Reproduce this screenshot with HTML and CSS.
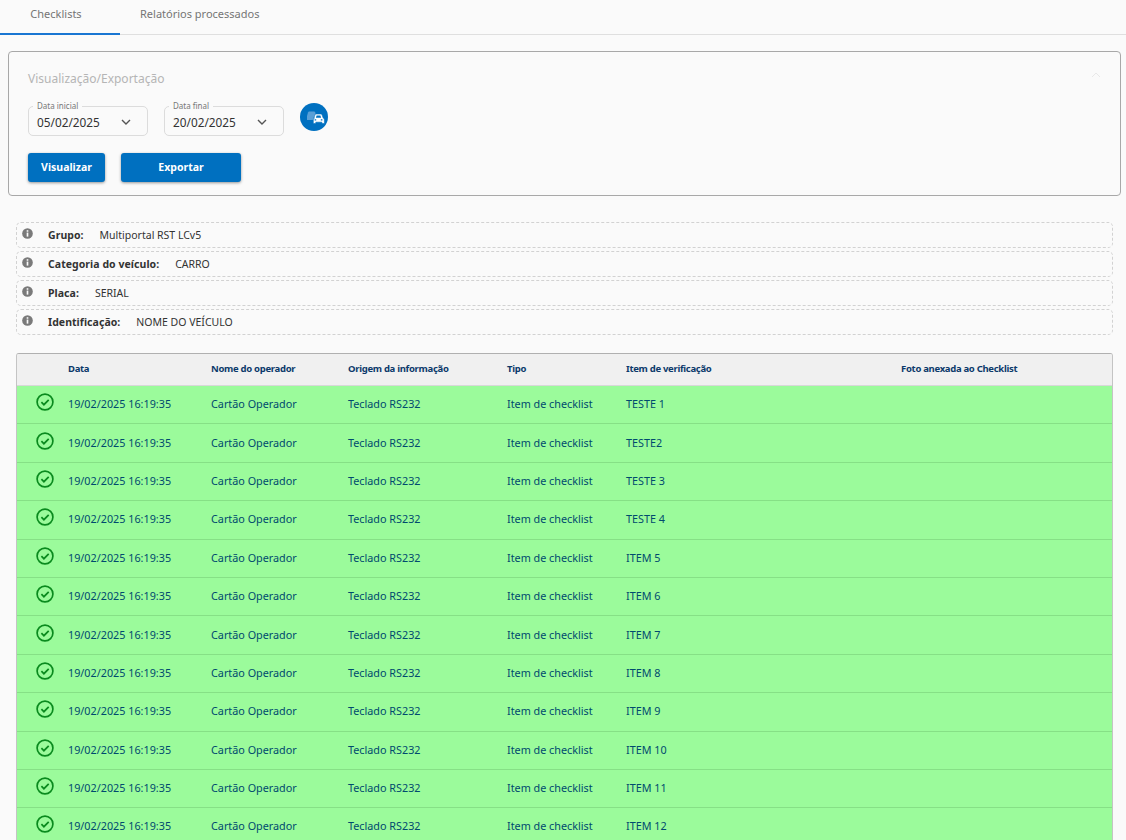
FILE: index.html
```html
<!DOCTYPE html>
<html lang="pt-BR">
<head>
<meta charset="utf-8">
<title>Checklists</title>
<link rel="stylesheet" href="styles.css">
</head>
<body>
<svg class="defs" width="0" height="0" aria-hidden="true">
  <symbol id="ok" viewBox="0 0 18 18"><circle cx="9" cy="9" r="7.9" fill="none" stroke="currentColor" stroke-width="1.7"/><path d="M5.4 9.2l2.5 2.5 4.8-4.9" fill="none" stroke="currentColor" stroke-width="1.7"/></symbol>
  <symbol id="info" viewBox="0 0 12 12"><circle cx="6" cy="6" r="5.8" fill="currentColor"/><rect x="5.1" y="2.4" width="1.8" height="1.7" fill="#fafafa"/><rect x="5.1" y="5" width="1.8" height="4.4" fill="#fafafa"/></symbol>
  <symbol id="chev" viewBox="0 0 10 6"><path d="M1 1l4 4 4-4" fill="none" stroke="currentColor" stroke-width="1.4"/></symbol>
</svg>
<nav class="tabs">
  <a class="tab tab-active">Checklists</a>
  <a class="tab">Relatórios processados</a>
</nav>
<main class="content">
  <section class="panel">
    <div class="panel-head">
      <h2 class="panel-title">Visualização/Exportação</h2>
      <svg class="panel-chev" viewBox="0 0 10 6"><path d="M1 5l4-4 4 4" fill="none" stroke="currentColor" stroke-width="1"/></svg>
    </div>
    <div class="filters">
      <div class="field"><span class="field-label">Data inicial</span><span class="field-value">05/02/2025</span><svg class="chev"><use href="#chev"/></svg></div>
      <div class="field"><span class="field-label">Data final</span><span class="field-value">20/02/2025</span><svg class="chev"><use href="#chev"/></svg></div>
      <button class="round-btn" type="button" aria-label="Veículos">
        <svg viewBox="0 0 28 28" width="28" height="28">
          <path fill="#5a9fd6" d="M7 17v-4l1-3.400C8.200 9 8.700 8.500 9.400 8.500h4.400c.7 0 1.200.5 1.400 1.100L16 13v4z"/>
          <path fill="#fff" stroke="#0070c0" stroke-width=".6" d="M13.800 15l1.200-3.200c.2-.5.6-.8 1.100-.8h4.800c.5 0 .9.300 1.100.8l1.200 3.200c.8.300 1.200.9 1.200 1.700V20.500h-2.500v-1.300h-6.100v1.300h-2.500v-3.800c0-.8.400-1.400 1.200-1.700z"/>
          <path fill="#0070c0" d="M15.900 14.700h5.200l-.7-2.100h-3.800zM14.600 16.200h1.600v1.300h-1.600zM20.800 16.200h1.600v1.300h-1.600z"/>
        </svg>
      </button>
    </div>
    <div class="actions">
      <button class="btn btn-view" type="button">Visualizar</button>
      <button class="btn btn-export" type="button">Exportar</button>
    </div>
  </section>

  <section class="info-list">
    <div class="info-row"><svg class="info-icon"><use href="#info"/></svg><strong>Grupo:</strong><span>Multiportal RST LCv5</span></div>
    <div class="info-row"><svg class="info-icon"><use href="#info"/></svg><strong>Categoria do veículo:</strong><span>CARRO</span></div>
    <div class="info-row"><svg class="info-icon"><use href="#info"/></svg><strong>Placa:</strong><span>SERIAL</span></div>
    <div class="info-row"><svg class="info-icon"><use href="#info"/></svg><strong>Identificação:</strong><span>NOME DO VEÍCULO</span></div>
  </section>

  <section class="table">
    <div class="tr th"><span></span><span>Data</span><span>Nome do operador</span><span>Origem da informação</span><span>Tipo</span><span>Item de verificação</span><span>Foto anexada ao Checklist</span></div>
    <div class="tr"><svg class="ok"><use href="#ok"/></svg><span>19/02/2025 16:19:35</span><span>Cartão Operador</span><span>Teclado RS232</span><span>Item de checklist</span><span>TESTE 1</span><span></span></div>
    <div class="tr"><svg class="ok"><use href="#ok"/></svg><span>19/02/2025 16:19:35</span><span>Cartão Operador</span><span>Teclado RS232</span><span>Item de checklist</span><span>TESTE2</span><span></span></div>
    <div class="tr"><svg class="ok"><use href="#ok"/></svg><span>19/02/2025 16:19:35</span><span>Cartão Operador</span><span>Teclado RS232</span><span>Item de checklist</span><span>TESTE 3</span><span></span></div>
    <div class="tr"><svg class="ok"><use href="#ok"/></svg><span>19/02/2025 16:19:35</span><span>Cartão Operador</span><span>Teclado RS232</span><span>Item de checklist</span><span>TESTE 4</span><span></span></div>
    <div class="tr"><svg class="ok"><use href="#ok"/></svg><span>19/02/2025 16:19:35</span><span>Cartão Operador</span><span>Teclado RS232</span><span>Item de checklist</span><span>ITEM 5</span><span></span></div>
    <div class="tr"><svg class="ok"><use href="#ok"/></svg><span>19/02/2025 16:19:35</span><span>Cartão Operador</span><span>Teclado RS232</span><span>Item de checklist</span><span>ITEM 6</span><span></span></div>
    <div class="tr"><svg class="ok"><use href="#ok"/></svg><span>19/02/2025 16:19:35</span><span>Cartão Operador</span><span>Teclado RS232</span><span>Item de checklist</span><span>ITEM 7</span><span></span></div>
    <div class="tr"><svg class="ok"><use href="#ok"/></svg><span>19/02/2025 16:19:35</span><span>Cartão Operador</span><span>Teclado RS232</span><span>Item de checklist</span><span>ITEM 8</span><span></span></div>
    <div class="tr"><svg class="ok"><use href="#ok"/></svg><span>19/02/2025 16:19:35</span><span>Cartão Operador</span><span>Teclado RS232</span><span>Item de checklist</span><span>ITEM 9</span><span></span></div>
    <div class="tr"><svg class="ok"><use href="#ok"/></svg><span>19/02/2025 16:19:35</span><span>Cartão Operador</span><span>Teclado RS232</span><span>Item de checklist</span><span>ITEM 10</span><span></span></div>
    <div class="tr"><svg class="ok"><use href="#ok"/></svg><span>19/02/2025 16:19:35</span><span>Cartão Operador</span><span>Teclado RS232</span><span>Item de checklist</span><span>ITEM 11</span><span></span></div>
    <div class="tr"><svg class="ok"><use href="#ok"/></svg><span>19/02/2025 16:19:35</span><span>Cartão Operador</span><span>Teclado RS232</span><span>Item de checklist</span><span>ITEM 12</span><span></span></div>
  </section>
</main>
</body>
</html>
```
FILE: styles.css
```css
* { box-sizing: border-box; }
html, body { margin: 0; height: 100%; overflow: hidden; }
body { background: #fafafa; font-family: "Noto Sans", Roboto, sans-serif; font-size: 11px; color: #333; }
.defs { position: absolute; }

.tabs { display: flex; height: 35px; border-bottom: 1px solid #dfdfdf; }
.tab { width: 120px; height: 35px; padding-top: 6px; text-align: center; color: #757575; font-size: 11px; line-height: 16px; }
.tab-active { padding-right: 8px; border-bottom: 2px solid #1976d2; }
.tab:last-child { width: 160px; text-align: left; padding-left: 20px; }

.content { padding: 16px 5px 0 8px; }
.panel { height: 145px; background: #fafafa; border: 1px solid #a8a8a8; border-radius: 4px; padding: 0 19px; }
.panel-head { display: flex; justify-content: space-between; align-items: center; height: 52px; }
.panel-title { margin: 0; font-size: 12px; font-weight: 400; color: #b5b5b5; }
.panel-chev { width: 10px; height: 6px; color: #e8e8e8; margin-bottom: 6px; }

.filters { display: flex; align-items: flex-start; gap: 16px; height: 49px; }
.field { position: relative; display: flex; align-items: center; justify-content: space-between; width: 120px; height: 30px; margin-top: 2px; padding: 2px 16px 0 8px; border: 1px solid #dcdcdc; border-radius: 5px; }
.field-label { position: absolute; left: 4px; top: -6px; padding: 0 4px; background: #fafafa; font-size: 8px; line-height: 10px; color: #777; }
.field-value { font-size: 11.800px; color: #333; }
.chev { width: 10px; height: 6px; color: #555; }
.round-btn { display: flex; align-items: center; justify-content: center; width: 28px; height: 28px; margin-top: -1px; padding: 0; border: 0; border-radius: 50%; background: #0070c0; }

.actions { display: flex; gap: 16px; }
.btn { height: 29px; padding: 0 0 2px; border: 0; border-radius: 3px; background: #0070c0; color: #fff; font-family: inherit; font-size: 10.500px; font-weight: 700; box-shadow: 0 1px 3px rgba(0,0,0,.4); }
.btn-view { width: 77px; }
.btn-export { width: 120px; }

.info-list { display: flex; flex-direction: column; gap: 3px; margin: 26px 8px 18px 8px; }
.info-row { display: flex; align-items: center; height: 26px; padding: 0 0 0 5px; border: 1px dashed #d2d2d2; border-radius: 5px; font-size: 10.500px; color: #333; }
.info-row strong { margin: 0 16px 0 0; font-weight: 700; letter-spacing: .05px; }
.info-icon { width: 11px; height: 11px; margin: -4px 15px 0 0; color: #7a7a7a; }

.table { margin: 0 8px; border: 1px solid #c4c4c4; border-top-color: #b0b0b0; border-bottom: 0; border-radius: 3px 3px 0 0; overflow: hidden; }
.tr { display: grid; grid-template-columns: 51px 143px 137px 159px 119px 275px 1fr; align-items: center; height: 38.400px; padding-bottom: 2px; background: #9bfb9b; border-bottom: 1px solid #86e086; color: #004a6e; font-size: 10.800px; }
.th { height: 32px; background: #f0f0f0; border-bottom: 1px solid #d8d8d8; color: #0c3a6b; font-size: 9.500px; font-weight: 700; letter-spacing: -.3px; }
.ok { justify-self: start; width: 18px; height: 18px; margin: -3px 0 0 19px; color: #0a8a1e; }
```
